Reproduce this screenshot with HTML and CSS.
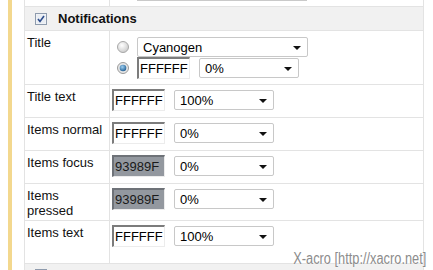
FILE: index.html
```html
<!DOCTYPE html>
<html lang="en">
<head>
    <meta charset="UTF-8">
    <title>Notifications</title>
    <link rel="stylesheet" href="styles.css">
</head>
<body>
   <div class="page">
       <div class="gutter"></div>
       <div class="bar"></div>
       <div class="spacer"></div>
       <div class="panel">
           <div class="row row-prev">
               <div class="label"></div>
               <div class="value"><div class="select-edge"></div></div>
           </div>
           <div class="group">
               <svg class="check" width="12" height="12" viewBox="0 0 12 12">
                   <rect x="0.5" y="0.5" width="11" height="11" fill="#f4f6f9" stroke="#8e9bad"/>
                   <rect x="1.5" y="1.5" width="9" height="9" fill="#e9edf3"/>
                   <path d="M3 6 L5 8.5 L9 3" fill="none" stroke="#2d4d8c" stroke-width="1.6"/>
               </svg>
               <span class="group-title">Notifications</span>
           </div>
           <div class="row row-title">
               <div class="label">Title</div>
               <div class="value">
                   <div class="radios">
                       <div class="radio-line line-top">
                           <svg class="radio" width="12" height="12" viewBox="0 0 12 12">
                               <defs>
                                   <radialGradient id="off" cx="40%" cy="35%" r="70%">
                                       <stop offset="0" stop-color="#ffffff"/>
                                       <stop offset="1" stop-color="#c9c9c9"/>
                                   </radialGradient>
                               </defs>
                               <circle cx="6" cy="6" r="5.5" fill="url(#off)" stroke="#a8a8a8"/>
                           </svg>
                           <div class="select select-wide">Cyanogen</div>
                       </div>
                       <div class="radio-line">
                           <svg class="radio" width="12" height="12" viewBox="0 0 12 12">
                               <defs>
                                   <radialGradient id="on" cx="40%" cy="35%" r="70%">
                                       <stop offset="0" stop-color="#9fd0f2"/>
                                       <stop offset="1" stop-color="#1c5a8f"/>
                                   </radialGradient>
                               </defs>
                               <circle cx="6" cy="6" r="5.5" fill="#e6e6e6" stroke="#9a9a9a"/>
                               <circle cx="6" cy="6" r="3.3" fill="url(#on)"/>
                           </svg>
                           <div class="field">FFFFFF</div>
                           <div class="select">0%</div>
                       </div>
                   </div>
               </div>
           </div>
           <div class="row row-std">
               <div class="label">Title text</div>
               <div class="value"><div class="field">FFFFFF</div><div class="select">100%</div></div>
           </div>
           <div class="row row-std">
               <div class="label">Items normal</div>
               <div class="value"><div class="field">FFFFFF</div><div class="select">0%</div></div>
           </div>
           <div class="row row-std">
               <div class="label">Items focus</div>
               <div class="value"><div class="field field-gray">93989F</div><div class="select">0%</div></div>
           </div>
           <div class="row row-pressed">
               <div class="label">Items<br>pressed</div>
               <div class="value"><div class="field field-gray">93989F</div><div class="select">0%</div></div>
           </div>
           <div class="row row-text">
               <div class="label">Items text</div>
               <div class="value"><div class="field">FFFFFF</div><div class="select">100%</div></div>
           </div>
           <div class="group group-next">
               <svg class="check" width="12" height="12" viewBox="0 0 12 12">
                   <rect x="0.5" y="0.5" width="11" height="11" fill="#f4f6f9" stroke="#8e9bad"/>
               </svg>
           </div>
       </div>
       <div class="mark">X-acro [http://xacro.net]</div>
   </div>
</body>
</html>
```

FILE: styles.css
```css
body {
    margin: 0;
    font-family: "Liberation Sans", Arial, sans-serif;
    font-size: 13px;
    line-height: 15px;
    color: #111;
    background: #fff;
}
.page {
    position: relative;
    display: flex;
    width: 433px;
    height: 270px;
    overflow: hidden;
}
.gutter {
    width: 8px;
}
.bar {
    width: 4px;
    background: #f3d88e;
}
.spacer {
    width: 12px;
}
.panel {
    width: 400px;
    box-sizing: border-box;
    border-left: 1px solid #e3e3e3;
    border-right: 1px solid #e3e3e3;
}
.row {
    display: grid;
    grid-template-columns: 85px 1fr;
    box-sizing: border-box;
    border-bottom: 1px solid #e3e3e3;
}
.label {
    border-right: 1px solid #e3e3e3;
    padding: 4px 2px;
}
.value {
    display: flex;
    align-items: center;
    align-self: start;
    padding: 4px 2px;
}
.row-prev {
    height: 7px;
}
.row-prev .label,
.row-prev .value {
    padding: 0;
}
.select-edge {
    margin-left: 27px;
    width: 170px;
    height: 0;
    border-bottom: 1px solid #c9c9c9;
}
.row-title {
    height: 54px;
}
.row-std {
    height: 33px;
}
.row-pressed {
    height: 37px;
}
.row-text {
    height: 43px;
}
.group {
    display: flex;
    align-items: center;
    box-sizing: border-box;
    height: 24px;
    padding-left: 10px;
    background: #f1f1f1;
    border-bottom: 1px solid #e3e3e3;
}
.group-next {
    height: 10px;
    align-items: flex-start;
    padding-top: 5px;
    border-bottom: 0;
}
.group-title {
    margin-left: 11px;
    font-weight: 700;
}
.radios {
    margin-top: 2px;
    margin-left: 5px;
}
.radio-line {
    display: flex;
    align-items: center;
}
.line-top {
    height: 20px;
}
.radio {
    margin-right: 8px;
}
.field {
    box-sizing: border-box;
    width: 53px;
    height: 22px;
    padding: 2px 0 0 1px;
    border-top: 2px solid #7c7c7c;
    border-left: 2px solid #7c7c7c;
    border-right: 1px solid #ececec;
    border-bottom: 1px solid #ececec;
    background: #fff;
    color: #000;
}
.field-gray {
    background: #93989f;
    border-top-color: #6e7278;
    border-left-color: #6e7278;
    color: #1a1a1a;
}
.select {
    position: relative;
    box-sizing: border-box;
    width: 100px;
    height: 20px;
    margin-left: 9px;
    padding: 2px 0 0 5px;
    border: 1px solid #c8c8c8;
    border-radius: 2px;
    background: #fff;
    color: #000;
}
.select::after {
    content: '';
    position: absolute;
    right: 6px;
    top: 8px;
    border-left: 4px solid transparent;
    border-right: 4px solid transparent;
    border-top: 4px solid #111;
}
.select-wide {
    width: 171px;
    margin-left: 0;
}
.mark {
    position: absolute;
    right: 7px;
    bottom: 2px;
    font-family: "Liberation Sans", Arial, sans-serif;
    font-size: 16px;
    line-height: 18px;
    color: #8c8c8c;
    white-space: nowrap;
    transform: scaleX(0.8);
    transform-origin: right bottom;
    text-shadow: 0 0 2px #fff, 0 0 1px #fff;
}
```
